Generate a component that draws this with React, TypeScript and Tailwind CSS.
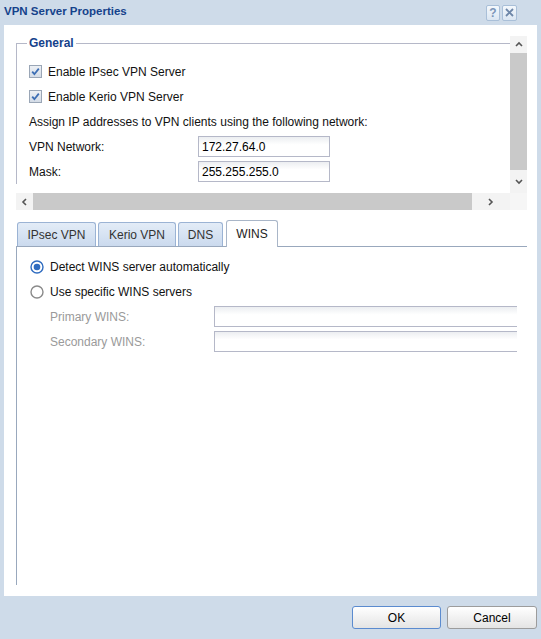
import React from 'react';

const font = { fontFamily: '"Liberation Sans", Arial, sans-serif' };

function Checkbox() {
  return (
    <svg width="13" height="13" viewBox="0 0 13 13" className="shrink-0">
      <defs>
        <linearGradient id="cbg" x1="0" y1="0" x2="0" y2="1">
          <stop offset="0" stopColor="#eef1f5" />
          <stop offset="1" stopColor="#d3dbe6" />
        </linearGradient>
      </defs>
      <rect x="0.5" y="0.5" width="12" height="12" fill="url(#cbg)" stroke="#9aa6b6" />
      <path d="M3.2 6.6 L5.4 9.2 L9.8 3.6" fill="none" stroke="#3d6eb4" strokeWidth="1.8" />
    </svg>
  );
}

function Radio({ checked }: { checked?: boolean }) {
  return (
    <svg width="14" height="14" viewBox="0 0 14 14" className="shrink-0">
      {checked ? (
        <>
          <circle cx="7" cy="7" r="6" fill="white" stroke="#2f6cc0" strokeWidth="1.4" />
          <circle cx="7" cy="7" r="3.3" fill="#2f6cc0" />
        </>
      ) : (
        <circle cx="7" cy="7" r="6" fill="white" stroke="#8a8a8a" strokeWidth="1.4" />
      )}
    </svg>
  );
}

function Chevron({ dir }: { dir: 'up' | 'down' | 'left' | 'right' }) {
  const d = {
    up: 'M1 5 L4 2 L7 5',
    down: 'M1 2 L4 5 L7 2',
    left: 'M5 1 L2 4 L5 7',
    right: 'M2 1 L5 4 L2 7',
  }[dir];
  return (
    <svg width="8" height="8" viewBox="0 0 8 8">
      <path d={d} fill="none" stroke="#555" strokeWidth="1.6" />
    </svg>
  );
}

function TextField({ value, width }: { value?: string; width: string }) {
  return (
    <div
      className={`${width} h-[21px] border border-[#b5b8c8] bg-linear-to-b from-[#eceef1] to-white to-40% flex items-center pl-[3px] text-[12px] text-black shrink-0`}
    >
      {value}
    </div>
  );
}

const tabs = [
  { label: 'IPsec VPN', w: 'w-[79px]' },
  { label: 'Kerio VPN', w: 'w-[78px]' },
  { label: 'DNS', w: 'w-[45px]' },
];

export default function App() {
  return (
    <div style={font} className="w-[541px] h-[639px] bg-[#cedbe9] flex flex-col overflow-hidden text-[12px] text-[#111]">
      {/* Title bar */}
      <div className="h-[25px] flex items-center justify-between pl-[4px] pr-[24px] pb-[2px] shrink-0">
        <span className="text-[11.5px] font-bold text-[#15428b]">VPN Server Properties</span>
        <div className="flex gap-[2px] mt-[2px]">
          <div className="w-[14px] h-[16px] border border-[#a9bfd8] rounded-[2px] bg-linear-to-b from-[#f4f8fc] to-[#dbe6f2] flex items-center justify-center text-[12px] font-bold text-[#7b95b8] leading-none">
            ?
          </div>
          <div className="w-[15px] h-[16px] border border-[#a9bfd8] rounded-[2px] bg-linear-to-b from-[#f4f8fc] to-[#dbe6f2] flex items-center justify-center">
            <svg width="9" height="9" viewBox="0 0 9 9">
              <path d="M1 1 L8 8 M8 1 L1 8" stroke="#6d86a8" strokeWidth="1.8" />
            </svg>
          </div>
        </div>
      </div>

      {/* Body */}
      <div className="flex-1 mx-[4px] bg-white flex flex-col">
        {/* Scrollable General area */}
        <div className="mt-[11px] ml-[12px] w-[511px] h-[174px] flex flex-col shrink-0">
          <div className="flex h-[157px]">
            <div className="w-[494px] h-[157px] overflow-hidden">
              <fieldset className="w-[560px] border-l border-t border-[#b5b8c8] pl-[10px] pt-[8px]">
                <legend className="px-[2px] text-[12px] font-bold text-[#15428b] leading-[15px]">General</legend>
                <div className="pl-[2px]">
                  <div className="h-[25px] flex items-center gap-[6px]">
                    <Checkbox />
                    <span>Enable IPsec VPN Server</span>
                  </div>
                  <div className="h-[25px] flex items-center gap-[6px]">
                    <Checkbox />
                    <span>Enable Kerio VPN Server</span>
                  </div>
                  <div className="h-[25px] flex items-center">
                    Assign IP addresses to VPN clients using the following network:
                  </div>
                  <div className="h-[25px] flex items-center">
                    <span className="w-[169px]">VPN Network:</span>
                    <TextField value="172.27.64.0" width="w-[132px]" />
                  </div>
                  <div className="h-[25px] flex items-center">
                    <span className="w-[169px]">Mask:</span>
                    <TextField value="255.255.255.0" width="w-[132px]" />
                  </div>
                </div>
              </fieldset>
            </div>
            {/* Vertical scrollbar */}
            <div className="w-[17px] h-[157px] bg-[#f3f3f3] flex flex-col">
              <div className="h-[17px] flex items-center justify-center">
                <Chevron dir="up" />
              </div>
              <div className="h-[117px] bg-[#c9c9c9]" />
              <div className="flex-1 flex items-center justify-center">
                <Chevron dir="down" />
              </div>
            </div>
          </div>
          {/* Horizontal scrollbar */}
          <div className="flex h-[17px]">
            <div className="w-[494px] h-[17px] bg-[#f3f3f3] flex items-center">
              <div className="w-[17px] flex items-center justify-center">
                <Chevron dir="left" />
              </div>
              <div className="w-[439px] h-[17px] bg-[#c9c9c9]" />
              <div className="flex-1 flex items-center justify-center">
                <Chevron dir="right" />
              </div>
            </div>
            <div className="w-[17px] h-[17px] bg-[#f6f6f6]" />
          </div>
        </div>

        {/* Tabs */}
        <div className="mt-[11px] ml-[12px] w-[511px] shrink-0">
          <div className="h-[26px] flex items-end gap-[2px] pl-[1px] border-b border-[#99a8bd]">
            {tabs.map((t) => (
              <div
                key={t.label}
                className={`${t.w} h-[24px] border border-b-0 border-[#9bb3d4] rounded-t-[3px] bg-linear-to-b from-[#e3ecf7] to-[#cbdaee] flex items-center justify-center text-[12px] text-[#333]`}
              >
                {t.label}
              </div>
            ))}
            <div className="w-[52px] h-[27px] ml-[1px] -mb-px border border-b-0 border-[#a9b6c8] rounded-t-[3px] bg-white flex items-center justify-center text-[12px] text-[#222] pb-[1px]">
              WINS
            </div>
          </div>
          <div className="w-[501px] h-[338px] border-l border-[#99a8bd] overflow-hidden pt-[7px] pl-[13px]">
            <div className="h-[25px] flex items-center gap-[6px]">
              <Radio checked />
              <span>Detect WINS server automatically</span>
            </div>
            <div className="h-[25px] flex items-center gap-[6px]">
              <Radio />
              <span>Use specific WINS servers</span>
            </div>
            <div className="pl-[20px]">
              <div className="h-[25px] flex items-center">
                <span className="w-[164px] shrink-0 text-[#9a9a9a]">Primary WINS:</span>
                <TextField width="w-[320px]" />
              </div>
              <div className="h-[25px] flex items-center">
                <span className="w-[164px] shrink-0 text-[#9a9a9a]">Secondary WINS:</span>
                <TextField width="w-[320px]" />
              </div>
            </div>
          </div>
        </div>
      </div>

      {/* Footer buttons */}
      <div className="h-[43px] shrink-0 flex justify-end items-start pt-[10px] pr-[4px] gap-[6px]">
        <button className="w-[89px] h-[23px] border border-[#5b8bcf] rounded-[3px] bg-linear-to-b from-white to-[#e4e4e4] text-[12px] text-black">
          OK
        </button>
        <button className="w-[90px] h-[23px] border border-[#9c9c9c] rounded-[3px] bg-linear-to-b from-white to-[#e4e4e4] text-[12px] text-black">
          Cancel
        </button>
      </div>
    </div>
  );
}
